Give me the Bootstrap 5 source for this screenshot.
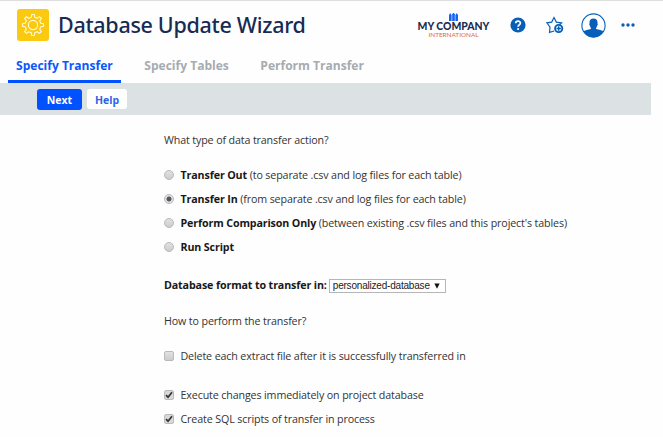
<!DOCTYPE html>
<html lang="en">
<head>
<meta charset="utf-8">
<meta name="viewport" content="width=device-width, initial-scale=1">
<title>Database Update Wizard</title>
<link href="https://cdn.jsdelivr.net/npm/bootstrap@5.3.0/dist/css/bootstrap.min.css" rel="stylesheet">
<style>
body{font-family:"Open Sans",sans-serif;font-size:10.7px;letter-spacing:-.13px;line-height:24px;color:#333;background:#fefefe;overflow:hidden}
.topbar{height:49px;border-top:1px solid #dedede;padding:0 28px 0 17px}
.app-icon{width:32px;height:32px;border-radius:3px;background:#fbc90f}
.app-title{font-family:"Noto Sans",sans-serif;font-size:21.5px;letter-spacing:-.3px;font-weight:500;line-height:32px;color:#172b54;margin-left:9px;white-space:nowrap}
.brand{width:73px;font-family:Lato,sans-serif;letter-spacing:0;padding-top:1px}
.brand-name{font-size:10.4px;font-weight:900;color:#1b2c52;line-height:13px;margin-top:-1px;white-space:nowrap}
.brand-sub{font-size:6.4px;color:#dd6a45;line-height:8px;margin-top:-2px}
.ico-help{margin-left:20px}
.ico-star{margin-left:20px}
.ico-user{margin-left:17px}
.ico-more{margin-left:15px}
.wizard-tabs{height:34px;padding-left:8px;gap:15.5px}
.wizard-tabs .nav-link{font-size:12.05px;letter-spacing:0;font-weight:700;line-height:30px;height:34px;padding:2px 8px 0;color:#a6abb2;border-bottom:3px solid transparent;border-radius:0;white-space:nowrap}
.wizard-tabs .nav-link.active{color:#0a58fa;border-color:#0052ff}
.toolbar{width:651px;height:32px;background:#dce1e4;padding-left:37px;gap:5px}
.toolbar .btn{font-size:10.5px;letter-spacing:0;font-weight:700;line-height:20px;padding:1px 0 0;border:0;border-radius:3px}
.btn-next{width:45px;height:21px;background:#0052ff;color:#fff}
.btn-help{width:40px;height:20px;background:#fff;color:#2b62ea}
.wizard-form{padding:13px 0 0 164px}
.gap-a{margin-top:11px}
.gap-b{margin-top:12px}
.gap-c{margin-top:14px}
.gap-d{margin-top:15px}
.wizard-form .form-check{min-height:24px;margin-bottom:0;padding:0;gap:6.5px}
.wizard-form .form-check-input{float:none;margin:0;width:10px;height:10px;border:1px solid #b9babb;background-color:#d8d9da;background-image:linear-gradient(#e2e2e2,#cbcccd);box-shadow:none}
.wizard-form .form-check-input[type=checkbox]{border-radius:2px}
.wizard-form .form-check-input[type=radio]:checked{background-image:radial-gradient(circle,#55575a 0 2.1px,#dfe0e1 2.9px);background-size:auto}
.wizard-form .form-check-input[type=checkbox]:checked{background-image:url("data:image/svg+xml,%3csvg xmlns='http://www.w3.org/2000/svg' viewBox='0 0 8 8'%3e%3cpath d='M1 4.2l2 2L7 1.2' fill='none' stroke='%23333' stroke-width='1.7'/%3e%3c/svg%3e");background-size:contain}
.wizard-form label{white-space:nowrap}
.wizard-form b{color:#181818}
.format-row{height:24px;gap:2px}
.format-select{width:117px;height:14px;margin-top:2px;padding:0 11px 0 3px;border:1px solid #b4b6b8;border-radius:0;font:10px/12px "Liberation Sans",sans-serif;letter-spacing:-.2px;color:#222;background:#fff url("data:image/svg+xml,%3csvg xmlns='http://www.w3.org/2000/svg' viewBox='0 0 6 6'%3e%3cpath d='M.4 .5h5.2L3 5.7z' fill='%23111'/%3e%3c/svg%3e") no-repeat right 5px center/6px 6px}
</style>
</head>
<body>
<header class="topbar d-flex align-items-center">
  <div class="app-icon d-flex align-items-center justify-content-center flex-shrink-0">
    <svg width="24" height="24" viewBox="0 0 24 24" fill="none" stroke="#fffbe0" stroke-width="1.1" stroke-linejoin="round"><circle cx="12" cy="12" r="4.6"/><path d="M10.3 4.2 10.7 1.500h2.600l.4 2.700 2.600 1.100 2.200-1.700 1.900 1.900-1.700 2.200 1.100 2.600 2.700.4v2.600l-2.700.4-1.100 2.600 1.700 2.200-1.900 1.900-2.200-1.700-2.600 1.100-.4 2.700h-2.600l-.4-2.700-2.600-1.100-2.200 1.700-1.900-1.900 1.700-2.200-1.100-2.600-2.700-.4v-2.600l2.700-.4 1.100-2.600-1.700-2.200 1.900-1.900 2.200 1.700z"/></svg>
  </div>
  <h1 class="app-title mb-0">Database Update Wizard</h1>
  <div class="d-flex align-items-center ms-auto">
    <div class="brand d-flex flex-column align-items-center">
      <svg width="9" height="8" viewBox="0 0 9 8" fill="#1264f4"><path d="M0 2h2.600v6H0zM3.200 1h2.600v7H3.200zM6.400 2H9v6H6.400z"/><circle cx="1.3" cy="1.4" r="1"/><circle cx="4.5" cy="1" r="1"/><circle cx="7.7" cy="1.4" r="1"/></svg>
      <div class="brand-name">MY COMPANY</div>
      <div class="brand-sub">INTERNATIONAL</div>
    </div>
    <svg class="ico-help" width="16" height="16" viewBox="0 0 16 16"><circle cx="8" cy="8" r="7.6" fill="#075fb8"/><path d="M5.700 6.300C5.700 3.300 10.400 3.400 10.400 6.100 10.400 7.800 8.100 7.700 8.100 9.700" fill="none" stroke="#fff" stroke-width="1.7"/><circle cx="8.1" cy="12" r="1.1" fill="#fff"/></svg>
    <svg class="ico-star" width="18" height="18" viewBox="0 0 18 18" fill="none" stroke="#075fb8"><path d="M8.200 15 3.500 16.400 4 11.200.9 6.800l4.800-.7L8 1.500l2.300 4.600 5.300.7-2.300 2" stroke-width="1.2"/><circle cx="12.7" cy="12.5" r="3.6" stroke-width="1.9" fill="#fff"/><path d="M12.700 10.300v4.400M10.500 12.500h4.400" stroke-width="1.5"/></svg>
    <svg class="ico-user" width="25" height="25" viewBox="0 0 25 25"><circle cx="12.5" cy="12.5" r="11.6" fill="#fff" stroke="#075fb8" stroke-width="1.1"/><path d="M2.500 18.200c2.200-1.300 6.900-1.400 7.600-2.700-.4-.9-1-1.600-1.200-2.700-.8-.7-.9-2-.3-2.500C8.100 7.200 9.600 5.400 12.500 5.400s4.400 1.800 3.900 4.900c.6.500.5 1.800-.3 2.500-.2 1.100-.8 1.800-1.200 2.700.7 1.300 5.400 1.400 7.600 2.700-4 8.200-16 8.200-20 0z" fill="#075fb8"/></svg>
    <svg class="ico-more" width="14" height="4" viewBox="0 0 14 4" fill="#075fb8"><circle cx="2" cy="2" r="1.7"/><circle cx="7" cy="2" r="1.7"/><circle cx="12" cy="2" r="1.7"/></svg>
  </div>
</header>
<nav class="nav wizard-tabs flex-nowrap">
  <a class="nav-link active" href="#">Specify Transfer</a>
  <a class="nav-link" href="#">Specify Tables</a>
  <a class="nav-link" href="#">Perform Transfer</a>
</nav>
<div class="toolbar d-flex align-items-center">
  <button class="btn btn-next" type="button">Next</button>
  <button class="btn btn-help" type="button">Help</button>
</div>
<form class="wizard-form">
  <div>What type of data transfer action?</div>
  <div class="form-check gap-a d-flex align-items-center"><input class="form-check-input" type="radio" name="action" id="out"><label for="out"><b>Transfer Out</b> (to separate .csv and log files for each table)</label></div>
  <div class="form-check d-flex align-items-center"><input class="form-check-input" type="radio" name="action" id="in" checked><label for="in"><b>Transfer In</b> (from separate .csv and log files for each table)</label></div>
  <div class="form-check d-flex align-items-center"><input class="form-check-input" type="radio" name="action" id="cmp"><label for="cmp"><b>Perform Comparison Only</b> (between existing .csv files and this project's tables)</label></div>
  <div class="form-check d-flex align-items-center"><input class="form-check-input" type="radio" name="action" id="run"><label for="run"><b>Run Script</b></label></div>
  <div class="format-row gap-c d-flex align-items-center"><label for="fmt"><b>Database format to transfer in:</b></label><select class="form-select format-select" id="fmt"><option>personalized-database</option></select></div>
  <div class="gap-b">How to perform the transfer?</div>
  <div class="form-check gap-a d-flex align-items-center"><input class="form-check-input" type="checkbox" id="del"><label for="del">Delete each extract file after it is successfully transferred in</label></div>
  <div class="form-check gap-d d-flex align-items-center"><input class="form-check-input" type="checkbox" id="exe" checked><label for="exe">Execute changes immediately on project database</label></div>
  <div class="form-check d-flex align-items-center"><input class="form-check-input" type="checkbox" id="sql" checked><label for="sql">Create SQL scripts of transfer in process</label></div>
</form>
<script src="https://cdn.jsdelivr.net/npm/bootstrap@5.3.0/dist/js/bootstrap.bundle.min.js"></script>
</body>
</html>
